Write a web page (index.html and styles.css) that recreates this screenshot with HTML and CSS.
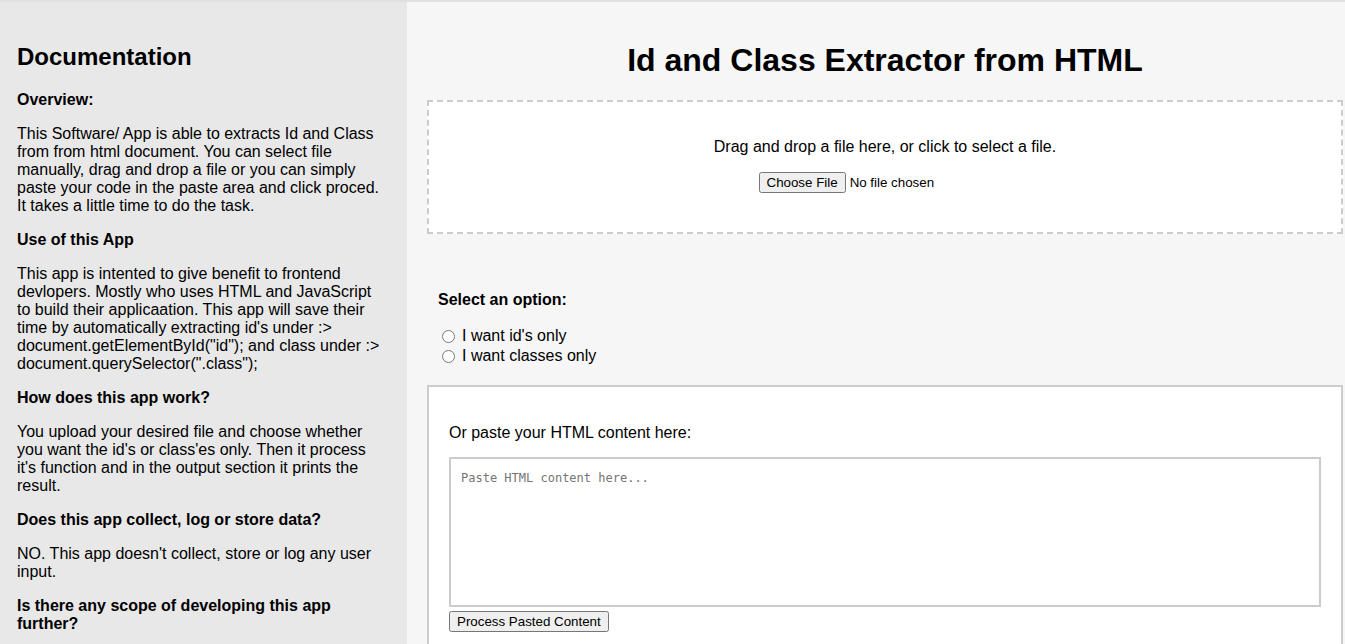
FILE: index.html
```html
<!DOCTYPE html>
<html lang="en">
<head>
<meta charset="utf-8">
<title>Id and Class Extractor from HTML</title>
<link rel="stylesheet" href="styles.css">
</head>
<body>
<div class="page">
  <aside class="docs">
    <h2 class="docs-title">Documentation</h2>
    <p class="q">Overview:</p>
    <p>This Software/ App is able to extracts Id and Class from from html document. You can select file manually, drag and drop a file or you can simply paste your code in the paste area and click proced. It takes a little time to do the task.</p>
    <p class="q">Use of this App</p>
    <p>This app is intented to give benefit to frontend devlopers. Mostly who uses HTML and JavaScript to build their applicaation. This app will save their time by automatically extracting id's under :&gt; document.getElementById("id"); and class under :&gt; document.querySelector(".class");</p>
    <p class="q">How does this app work?</p>
    <p>You upload your desired file and choose whether you want the id's or class'es only. Then it process it's function and in the output section it prints the result.</p>
    <p class="q">Does this app collect, log or store data?</p>
    <p>NO. This app doesn't collect, store or log any user input.</p>
    <p class="q">Is there any scope of developing this app further?</p>
  </aside>
  <main class="main">
    <h1 class="title">Id and Class Extractor from HTML</h1>
    <div class="drop">
      <p class="drop-text">Drag and drop a file here, or click to select a file.</p>
      <div class="file-row"><input class="file" type="file"></div>
    </div>
    <div class="options">
      <p class="q opt-title">Select an option:</p>
      <label class="opt"><input class="radio" type="radio" name="mode"> I want id's only</label>
      <label class="opt"><input class="radio" type="radio" name="mode"> I want classes only</label>
    </div>
    <div class="paste">
      <p class="paste-label">Or paste your HTML content here:</p>
      <textarea class="paste-area" placeholder="Paste HTML content here..."></textarea>
      <button class="btn" type="button">Process Pasted Content</button>
    </div>
  </main>
</div>
</body>
</html>
```

FILE: styles.css
```css
html, body {
  margin: 0;
  padding: 0;
  overflow: hidden;
}

body {
  font-family: "Liberation Sans", Arial, sans-serif;
  font-size: 16px;
  line-height: 18px;
  color: #000;
  background: #f6f6f6;
}

.page {
  display: flex;
  align-items: stretch;
  border-top: 2px solid #e0e0e0;
  min-height: 100vh;
}

.docs {
  flex: none;
  width: 407px;
  box-sizing: border-box;
  padding: 41px 20px 0 17px;
  background: #e8e8e8;
}

.docs p {
  margin: 16px 0;
}

.docs-title {
  font-size: 24px;
  line-height: 28px;
  margin: 0 0 20px;
  font-weight: bold;
}

.docs .q:first-of-type {
  margin-top: 20px;
}

.q {
  font-weight: bold;
}

.main {
  flex: 1;
  min-width: 0;
  box-sizing: border-box;
  padding: 20px 2px 0 20px;
  background: #f6f6f6;
}

.title {
  font-size: 32px;
  line-height: 37px;
  font-weight: bold;
  text-align: center;
  margin: 20px 0 21px;
}

.drop {
  box-sizing: border-box;
  height: 134px;
  border: 2px dashed #cccccc;
  background: #ffffff;
  padding: 20px 20px 19px;
  text-align: center;
}

.drop-text {
  margin: 16px 0;
}

.file-row {
  display: flex;
  justify-content: center;
}

.file {
  font-family: "Liberation Sans", Arial, sans-serif;
  font-size: 13.33px;
}

.options {
  margin-top: 57px;
  padding: 0 11px;
}

.opt-title {
  margin: 0 0 17px;
}

.opt {
  display: flex;
  align-items: center;
  height: 20px;
}

.radio {
  width: 13px;
  height: 13px;
  margin: 0 7px 0 4px;
}

.paste {
  margin-top: 19px;
  border: 2px solid #cccccc;
  background: #ffffff;
  padding: 20px 20px 40px;
}

.paste-label {
  margin: 17px 0 15px;
}

.paste-area {
  display: block;
  width: 100%;
  height: 150px;
  box-sizing: border-box;
  border: 2px solid #cccccc;
  padding: 12px 10px 10px;
  margin: 0 0 4px;
  font-family: "DejaVu Sans Mono", "Liberation Mono", monospace;
  font-size: 12px;
  line-height: 15px;
  resize: none;
  outline: none;
}

.paste-area::placeholder {
  color: #757575;
}

.btn {
  font-family: "Liberation Sans", Arial, sans-serif;
  font-size: 13.33px;
}
```
